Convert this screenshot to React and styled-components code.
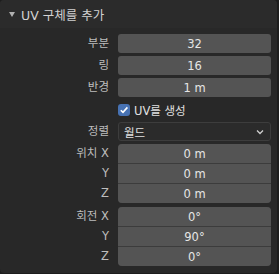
import React from "react";
import styled, { createGlobalStyle } from "styled-components";

const GlobalStyle = createGlobalStyle`
  body {
    margin: 0;
    background: #1d1d1d;
    font-family: "DejaVu Sans", "Noto Sans CJK KR", sans-serif;
  }
`;

const Panel = styled.div`
  width: 277px;
  height: 273px;
  background: #282828;
  border-radius: 4px;
  box-sizing: border-box;
  overflow: hidden;
`;

const Header = styled.div`
  height: 28px;
  display: flex;
  align-items: center;
  gap: 6px;
  padding-left: 9px;
  background: #2b2b2b;
  color: #d2d2d2;
  font-size: 12.5px;
`;

const Arrow = styled.span`
  width: 0;
  height: 0;
  border-left: 3px solid transparent;
  border-right: 3px solid transparent;
  border-top: 5px solid #b0b0b0;
`;

const Body = styled.div`
  display: flex;
  flex-direction: column;
  gap: 3px;
  padding-top: 6px;
`;

const Row = styled.div`
  display: grid;
  grid-template-columns: 118px 153px;
  align-items: stretch;
  margin-top: ${(p) => p.$extra || 0}px;
`;

const Label = styled.div`
  display: flex;
  flex-direction: column;
  align-items: flex-end;
  padding-right: 9px;
  color: #bdbdbd;
  font-size: 11.5px;
`;

const LabelLine = styled.div`
  height: ${(p) => p.$h || 19}px;
  line-height: ${(p) => p.$h || 19}px;
`;

const Field = styled.div`
  height: 19px;
  background: #545454;
  border-radius: 3px;
  color: #e6e6e6;
  font-size: 11.5px;
  display: flex;
  align-items: center;
  justify-content: center;
`;

const Group = styled.div`
  display: flex;
  flex-direction: column;
  gap: 1px;
  background: #3c3c3c;
  border-radius: 4px;
  overflow: hidden;
`;

const GroupField = styled(Field)`
  border-radius: 0;
`;

const CheckRow = styled.div`
  height: 19px;
  display: flex;
  align-items: center;
  gap: 4px;
  color: #e0e0e0;
  font-size: 11.5px;
`;

const Box = styled.div`
  width: 12px;
  height: 12px;
  border-radius: 3px;
  background: #4772b3;
  display: flex;
  align-items: center;
  justify-content: center;
`;

const Select = styled.div`
  height: 19px;
  box-sizing: border-box;
  background: #2b2b2b;
  border: 1px solid #3d3d3d;
  border-radius: 3px;
  color: #e0e0e0;
  font-size: 11.5px;
  display: flex;
  align-items: center;
  justify-content: space-between;
  padding: 0 6px 0 5px;
`;

const Empty = styled.div``;

const Chevron = () => (
  <svg width="8" height="6" viewBox="0 0 8 6">
    <path d="M1 1.5 L4 4.5 L7 1.5" fill="none" stroke="#cfcfcf" strokeWidth="1.3" />
  </svg>
);

const Check = () => (
  <svg width="10" height="10" viewBox="0 0 10 10">
    <path d="M1.8 5.2 L4 7.4 L8.4 2.4" fill="none" stroke="#fff" strokeWidth="1.6" />
  </svg>
);

const singles = [
  ["부분", "32"],
  ["링", "16"],
  ["반경", "1 m"],
];

const groups = [
  { title: "위치", values: ["0 m", "0 m", "0 m"] },
  { title: "회전", values: ["0°", "90°", "0°"] },
];

export default function App() {
  return (
    <>
      <GlobalStyle />
      <Panel>
        <Header>
          <Arrow />
          UV 구체를 추가
        </Header>
        <Body>
          {singles.map(([label, value]) => (
            <Row key={label}>
              <Label>
                <LabelLine>{label}</LabelLine>
              </Label>
              <Field>{value}</Field>
            </Row>
          ))}
          <Row>
            <Empty />
            <CheckRow>
              <Box>
                <Check />
              </Box>
              UV를 생성
            </CheckRow>
          </Row>
          <Row>
            <Label>
              <LabelLine>정렬</LabelLine>
            </Label>
            <Select>
              월드
              <Chevron />
            </Select>
          </Row>
          {groups.map((g, gi) => (
            <Row key={g.title} $extra={gi ? 1 : 0}>
              <Label>
                <LabelLine>{g.title} X</LabelLine>
                <LabelLine $h={20}>Y</LabelLine>
                <LabelLine $h={20}>Z</LabelLine>
              </Label>
              <Group>
                {g.values.map((v, i) => (
                  <GroupField key={i}>{v}</GroupField>
                ))}
              </Group>
            </Row>
          ))}
        </Body>
      </Panel>
    </>
  );
}
